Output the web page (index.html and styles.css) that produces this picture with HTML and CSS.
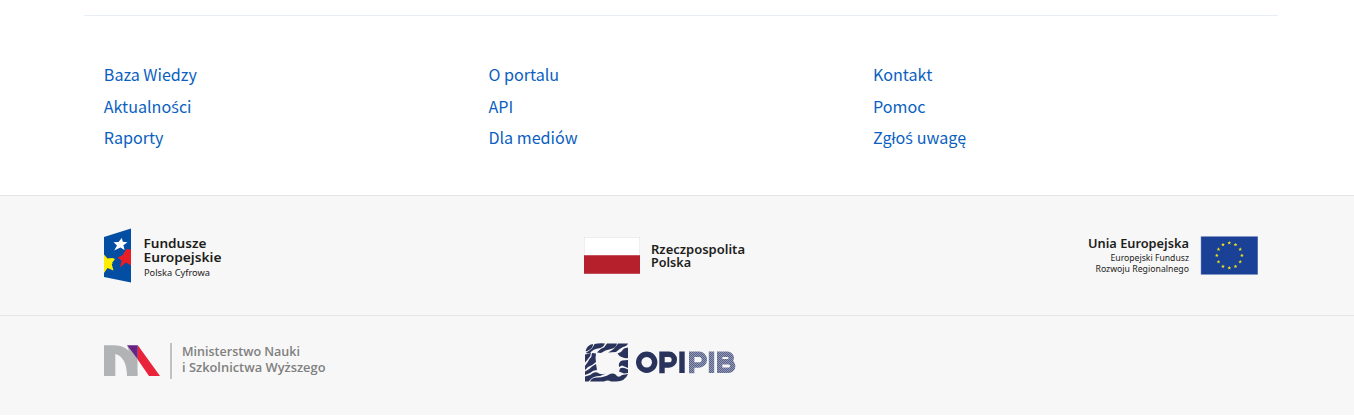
FILE: index.html
```html
<!DOCTYPE html>
<html lang="pl">
<head>
<meta charset="utf-8">
<title>Stopka</title>
<link rel="stylesheet" href="styles.css">
</head>
<body>
<footer class="footer">
  <nav class="footer-nav">
    <ul class="nav-list">
      <li><a href="#">Baza Wiedzy</a></li>
      <li><a href="#">Aktualno<span class="accent">ś</span>ci</a></li>
      <li><a href="#">Raporty</a></li>
    </ul>
    <ul class="nav-list">
      <li><a href="#">O portalu</a></li>
      <li><a href="#">API</a></li>
      <li><a href="#">Dla mediów</a></li>
    </ul>
    <ul class="nav-list">
      <li><a href="#">Kontakt</a></li>
      <li><a href="#">Pomoc</a></li>
      <li><a href="#">Zgło<span class="accent">ś</span> uwagę</a></li>
    </ul>
  </nav>

  <div class="band band-funds">
    <div class="band-inner">
      <svg class="logo" width="120" height="56" viewBox="104 228 120 56">
        <path fill="#034ea2" d="M104 237L131 228.500V282.500L104 277Z"/>
        <path fill="#fff" d="M121.800 238L122.800 241.800L127.500 242.300L123.400 245.300L124.600 250L120.400 247.400L114.200 250.500L117 245.500L113.500 242.200L118.500 242Z"/>
        <path fill="#ffed00" d="M104 254.500L107.500 258.500L117 257.500L111.800 264.500L113.500 270.500L107.500 268L104 273Z"/>
        <path fill="#e91d25" d="M131 249.500L126.500 249L122.800 254.500L116 257.500L121.500 260.500L120 267.500L126 262.500L131 265.500Z"/>
        <path fill="#034ea2" d="M112.500 258Q116 249 124 251.500L122 255.500L117.500 257.500L121 260.500L120 263Q116 265 112 263L115 259Z"/>
        <g fill="#1d1d1b">
          <text class="ubuntu strong" x="143.500" y="248.300" font-size="12.500" textLength="63" lengthAdjust="spacingAndGlyphs">Fundusze</text>
          <text class="ubuntu strong" x="143.500" y="262" font-size="12.500" textLength="78" lengthAdjust="spacingAndGlyphs">Europejskie</text>
          <text class="ubuntu" x="144" y="275.500" font-size="9" textLength="66" lengthAdjust="spacingAndGlyphs">Polska Cyfrowa</text>
        </g>
      </svg>
      <svg class="logo" width="162" height="56" viewBox="584 228 162 56">
        <path fill="#dedede" d="M584 237h56v37h-56z"/>
        <path fill="#fff" d="M584.500 237.500h55v18h-55z"/>
        <path fill="#b6202c" d="M584 255.300h56v18.500h-56z"/>
        <g fill="#1d1d1b">
          <text class="ubuntu strong" x="651" y="254" font-size="12" textLength="94" lengthAdjust="spacingAndGlyphs">Rzeczpospolita</text>
          <text class="ubuntu strong" x="651" y="267" font-size="12" textLength="40" lengthAdjust="spacingAndGlyphs">Polska</text>
        </g>
      </svg>
      <svg class="logo" width="172" height="56" viewBox="1086 228 172 56">
        <g fill="#1d1d1b">
          <text class="ubuntu strong" x="1088" y="248.300" font-size="13" textLength="101" lengthAdjust="spacingAndGlyphs">Unia Europejska</text>
          <text class="ubuntu" x="1110.500" y="261" font-size="9" textLength="78.500" lengthAdjust="spacingAndGlyphs">Europejski Fundusz</text>
          <text class="ubuntu" x="1095.500" y="272" font-size="9" textLength="93.500" lengthAdjust="spacingAndGlyphs">Rozwoju Regionalnego</text>
        </g>
        <path fill="#8c9fca" d="M1200.700 236.300h57.300v38.500h-57.300z"/>
        <path fill="#1a4195" d="M1201.200 236.800h56.300v37.500h-56.300z"/>
        <defs><path id="star" fill="#f5e51b" d="M0-2L.5-.65L1.900-.62L.8.250L1.200 1.600L0 .8L-1.200 1.600L-.8.250L-1.900-.62L-.5-.65Z"/></defs>
        <use href="#star" x="1229.300" y="243"/><use href="#star" x="1235.500" y="244.700"/>
        <use href="#star" x="1240.200" y="249.300"/><use href="#star" x="1241.900" y="255.500"/>
        <use href="#star" x="1240.200" y="261.800"/><use href="#star" x="1235.500" y="266.400"/>
        <use href="#star" x="1229.300" y="268"/><use href="#star" x="1223" y="266.400"/>
        <use href="#star" x="1218.500" y="261.800"/><use href="#star" x="1216.800" y="255.500"/>
        <use href="#star" x="1218.500" y="249.300"/><use href="#star" x="1223" y="244.700"/>
      </svg>
    </div>
  </div>

  <div class="band band-owners">
    <div class="band-inner owners">
      <svg class="logo" width="224" height="44" viewBox="104 340 224 44">
        <path fill="#b1b3b4" d="M104 345.300H114C128 345.300 137.500 356 137.500 376H127C127 364 123 356 115.300 354V376H104Z"/>
        <path fill="#b1b3b4" d="M127 345.300L137.500 359V376Z"/>
        <path fill="#662482" d="M127 345.300H137.800V359.500Z"/>
        <path fill="#e9243a" d="M137.800 345.300L160 376H149L137.800 359.800Z"/>
        <path fill="#b1b3b4" d="M170.200 343h1.600v36h-1.600z"/>
        <g fill="#808080">
          <text class="source strong" x="182" y="356.300" font-size="12" textLength="118" lengthAdjust="spacingAndGlyphs">Ministerstwo Nauki</text>
          <text class="source strong" x="182" y="372" font-size="12" textLength="143.500" lengthAdjust="spacingAndGlyphs">i Szkolnictwa Wyższego</text>
        </g>
      </svg>
      <svg class="logo" width="154" height="44" viewBox="584 340 154 44">
        <defs>
          <pattern id="hatch" width="2" height="2" patternUnits="userSpaceOnUse">
            <path fill="#9499b3" d="M0 0h2v2H0z"/>
            <path fill="#59628c" d="M0 0h1v1H0zM1 1h1v1H1z"/>
          </pattern>
        </defs>
        <g fill="#29335c">
          <path d="M585.500 351Q587 345 593 344Q593 348 589 350Q587 351.500 585.500 351Z"/>
          <path d="M594.500 344Q599 343 605 343.500Q603 348 598 348.500Q593 349 590 353Q587 354 586 352.500Q592 350 594.500 344Z"/>
          <path d="M607 343.500H617Q616 348 611 349Q605 350 601 353L597 352.500Q601 348 604 347.500Z"/>
          <path d="M618 343.500H628Q627 346 623 347Q619 349 616 352L608 352.500Q615 349 618 343.500Z"/>
          <path d="M628 347.500V358Q624 358.500 621.500 357Q619 356 617.500 353.500Q622 352 624 348.500Z"/>
          <path d="M585 354.500Q589 354 591 352.500Q591 356 588 359L585 362.500Z"/>
          <path d="M592 353L596 353.500Q595 359 596 362Q593 365 588 367L585 370V366Q588 362 589.500 359Q592 357 592 353Z"/>
          <path d="M596 364L597 370Q593 370 590 373L585 375V371.500Q590 369 592 366.500Z"/>
          <path d="M628 360V368L622 365.500L619 367Q618 362 622 360.500Z"/>
          <path d="M620 368.500Q623 366.500 628 369.500V373L624 373.500L619 371.500Z"/>
          <path d="M585 376.500Q590 376 593 373Q596 371.500 599 373.500Q602 375 606 373.500L600 376Q593 376 590 380L588.500 381.500H585Z"/>
          <path d="M590 381.500Q592 377 598 377.500Q605 377 609 374.500Q614 372 617 376Q619 378 622 375L628 374Q625 381.500 616 381.500H611Q608 379.500 604 381.500Z"/>
        </g>
        <g fill="none" stroke-width="5.400">
          <ellipse cx="646.700" cy="362.300" rx="8" ry="8" stroke="#29335c"/>
          <path stroke="#29335c" d="M662 373.200V354.300H669A4.800 4.800 0 0 1 669 365H664M682 351.600V373"/>
          <path stroke="url(#hatch)" d="M691.700 373.200V354.300H699A4.800 4.800 0 0 1 699 365H694M711.500 351.600V373M719.700 354.300H727.500A3.700 3.700 0 0 1 727.500 361.800H719.700H728.500A4 4 0 0 1 728.500 370.300H719.700Z"/>
        </g>
      </svg>
    </div>
  </div>
</footer>
</body>
</html>
```

FILE: styles.css
```css
* { box-sizing: border-box; }

body {
  margin: 0;
  background: #fff;
  font-family: "Noto Sans CJK JP", "Open Sans", sans-serif;
}

.footer { padding-top: 15px; }

.footer-nav {
  display: grid;
  grid-template-columns: repeat(3, 384.6px);
  width: 1194px;
  height: 180px;
  margin-left: 84px;
  padding: 43px 19.8px 0;
  border-top: 1px solid #e9edf5;
}

.nav-list {
  display: flex;
  flex-direction: column;
  gap: .6px;
  margin: 0;
  padding: 0;
  font-size: 16.130px;
  line-height: 31px;
  list-style: none;
}

.nav-list li { height: 31px; }

.nav-list a {
  color: #0b5fc0;
  text-decoration: none;
}

.accent { font-family: "Open Sans", "Noto Sans", sans-serif; line-height: 1; }

.band {
  background: #f7f7f7;
  border-top: 1px solid #e4e4e4;
}

.band-funds { height: 120px; }
.band-owners { height: 100px; }

.band-inner {
  display: grid;
  grid-template-columns: 480px 1fr auto;
  width: 1194px;
  margin-left: 84px;
  padding: 32px 20px 0;
}

.owners { padding-top: 24px; }

.logo { display: block; }
.ubuntu { font-family: "Noto Sans", "Open Sans", sans-serif; }
.source { font-family: "Open Sans", "Noto Sans", sans-serif; }
.strong { font-weight: 600; }
```
